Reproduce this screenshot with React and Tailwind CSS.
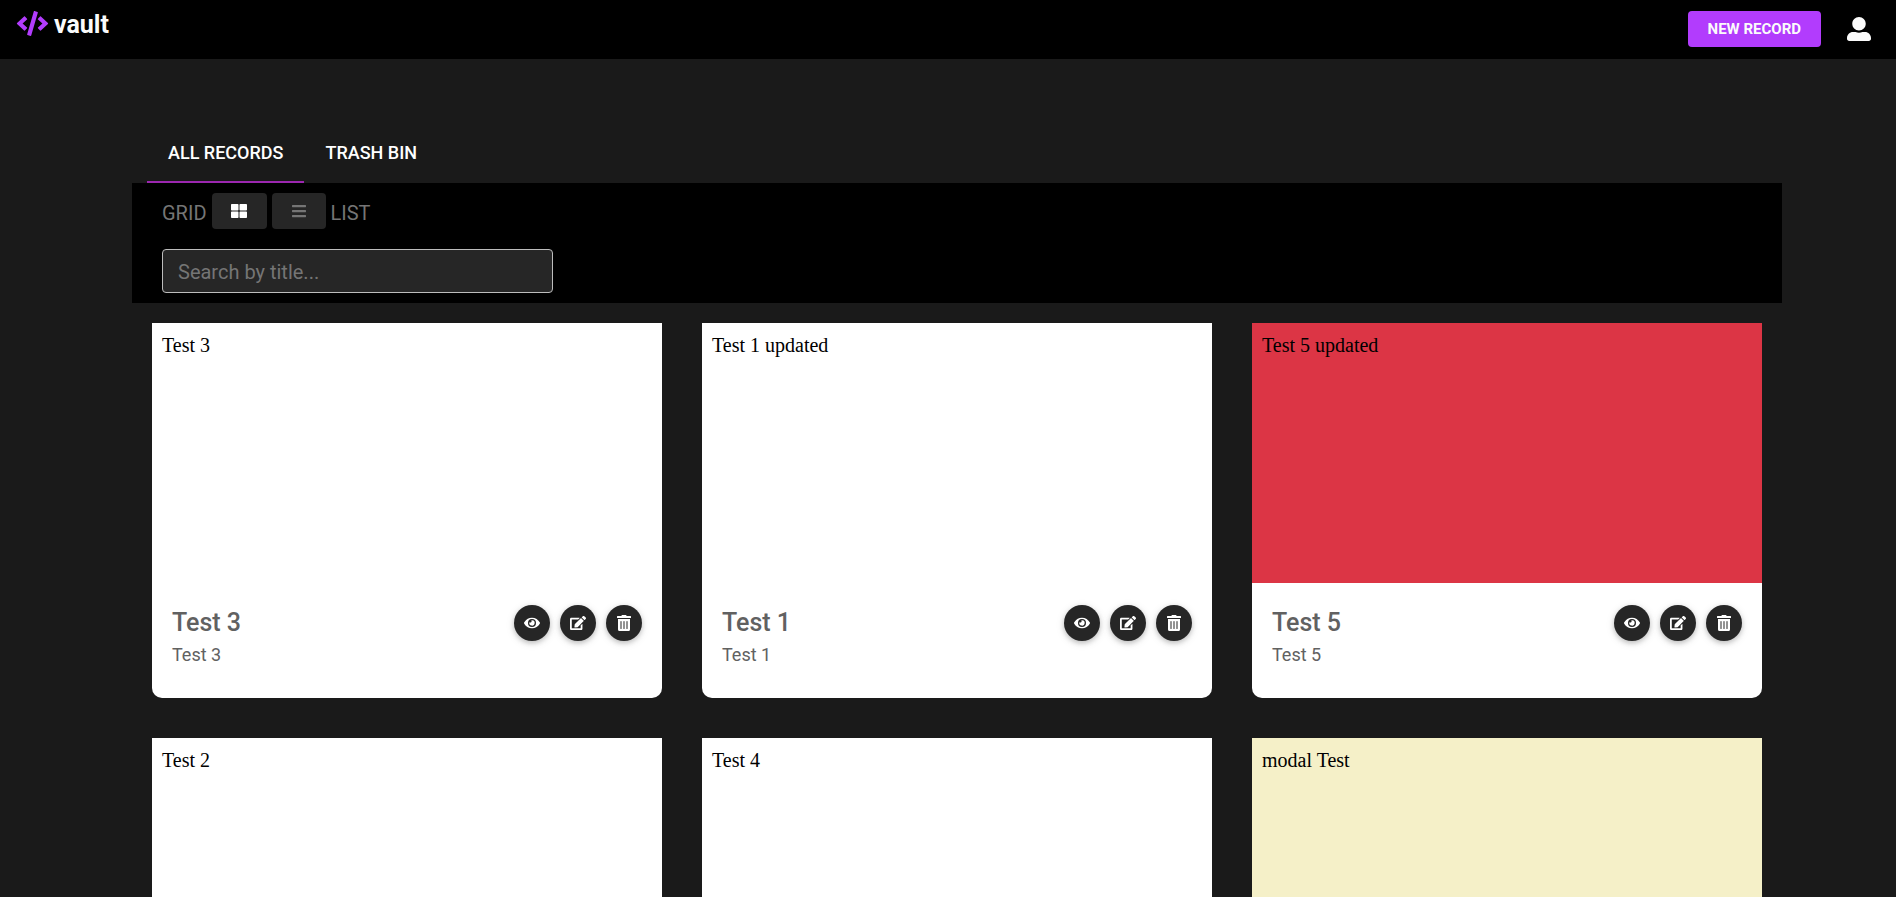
import { FaBars, FaCode, FaEdit, FaEye, FaThLarge, FaTrashAlt, FaUserAlt } from "react-icons/fa";

const records = [
  { id: 3, preview: "Test 3", title: "Test 3", description: "Test 3", background: "bg-white" },
  { id: 1, preview: "Test 1 updated", title: "Test 1", description: "Test 1", background: "bg-white" },
  { id: 5, preview: "Test 5 updated", title: "Test 5", description: "Test 5", background: "bg-[#dc3545]" },
  { id: 2, preview: "Test 2", title: "Test 2", description: "Test 2", background: "bg-white" },
  { id: 4, preview: "Test 4", title: "Test 4", description: "Test 4", background: "bg-white" },
  { id: 6, preview: "modal Test", title: "modal Test", description: "modal Test", background: "bg-[#f5f0c8]" },
];

function Header() {
  return (
    <header className="flex items-start justify-between bg-black pt-[11px] pr-[25px] pb-3 pl-4">
      <a href="#" className="flex items-start gap-[5px] text-[25px] leading-7 font-bold text-[#fbfbfb]">
        <FaCode className="h-[25px] w-[33px] text-[#b23cfd]" aria-hidden="true" />
        <span>vault</span>
      </a>
      <div className="flex items-center gap-[26px]">
        <button type="button" className="h-9 rounded-sm bg-[#b23cfd] px-5 pt-px text-[15px] font-bold text-[#fbfbfb]">
          NEW RECORD
        </button>
        <button type="button" aria-label="Account" className="text-[#fbfbfb]">
          <FaUserAlt className="size-6" />
        </button>
      </div>
    </header>
  );
}

function Tabs() {
  return (
    <nav className="flex pl-[15px] text-lg font-medium text-white">
      <a href="#records" className="flex h-[62px] items-center border-b-2 border-[#9c27b0] px-[21px] pt-[3px]">
        ALL RECORDS
      </a>
      <a href="#trash" className="flex h-[62px] items-center border-b-2 border-transparent px-[21px] pt-[3px]">
        TRASH BIN
      </a>
    </nav>
  );
}

function Toolbar() {
  return (
    <div className="flex flex-col gap-5 bg-black px-[30px] py-[10px] text-xl text-[#757575]">
      <div className="flex h-9 items-center gap-[5px]">
        <span className="pt-[3px]">GRID</span>
        <button
          type="button"
          aria-label="Grid view"
          className="flex h-9 w-[55px] items-center justify-center rounded-sm bg-[#262626] text-white"
        >
          <FaThLarge className="size-4" />
        </button>
        <button
          type="button"
          aria-label="List view"
          className="flex h-9 w-[54px] items-center justify-center rounded-sm bg-[#262626]"
        >
          <FaBars className="size-4" />
        </button>
        <span className="pt-[3px]">LIST</span>
      </div>
      <input
        type="search"
        aria-label="Search by title"
        placeholder="Search by title..."
        className="h-11 w-full max-w-[391px] rounded border border-[#bdbdbd] bg-[#262626] px-[15px] pt-px text-white placeholder:text-[#757575]"
      />
    </div>
  );
}

function ActionButton({ label, icon: Icon }) {
  return (
    <button
      type="button"
      aria-label={label}
      className="flex size-9 items-center justify-center rounded-full bg-[#262626] text-base text-white shadow-[0_2px_5px_rgba(0,0,0,0.2),0_2px_10px_rgba(0,0,0,0.1)]"
    >
      <Icon />
    </button>
  );
}

function RecordCard({ record }) {
  return (
    <article className="overflow-hidden rounded-b-[10px] bg-white">
      <div className={`h-[260px] p-[10px] font-['Liberation_Serif',serif] text-xl leading-6 text-black ${record.background}`}>
        {record.preview}
      </div>
      <div className="flex h-[115px] items-start justify-between px-5 pt-[22px]">
        <div className="text-[#616161]">
          <h2 className="text-[25px] leading-9 font-medium">{record.title}</h2>
          <p className="text-lg leading-7">{record.description}</p>
        </div>
        <div className="flex gap-[10px]">
          <ActionButton label={`View ${record.title}`} icon={FaEye} />
          <ActionButton label={`Edit ${record.title}`} icon={FaEdit} />
          <ActionButton label={`Delete ${record.title}`} icon={FaTrashAlt} />
        </div>
      </div>
    </article>
  );
}

export default function App() {
  return (
    <div className="h-screen overflow-y-auto border-r border-white bg-[#1a1a1a] font-[Roboto,sans-serif] [scrollbar-width:none]">
      <Header />
      <main className="mr-[114px] ml-[132px] pt-[62px]">
        <Tabs />
        <Toolbar />
        <section className="grid grid-cols-3 gap-10 p-5">
          {records.map((record) => (
            <RecordCard key={record.id} record={record} />
          ))}
        </section>
      </main>
    </div>
  );
}
